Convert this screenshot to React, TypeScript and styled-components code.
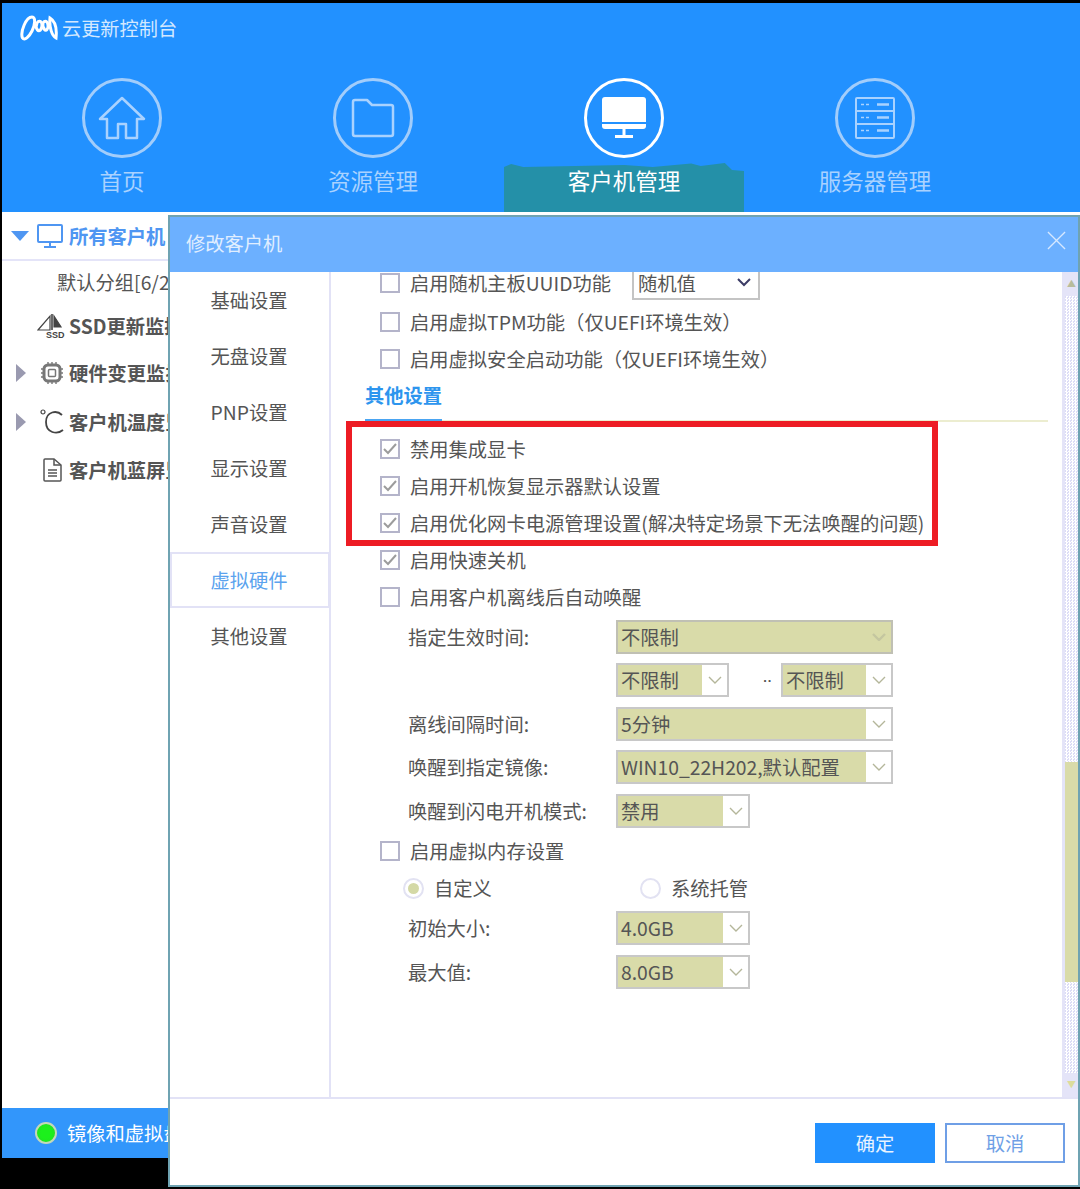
import styled, { createGlobalStyle } from "styled-components";

const FONT = `"Noto Sans CJK SC", "Noto Sans", sans-serif`;

const NAV_ITEMS = [
  { label: "首页", icon: "home" },
  { label: "资源管理", icon: "folder" },
  { label: "客户机管理", icon: "monitor", active: true },
  { label: "服务器管理", icon: "server" },
];

const DIALOG_TABS = ["基础设置", "无盘设置", "PNP设置", "显示设置", "声音设置", "虚拟硬件", "其他设置"];

const NavIcon = ({ name }: { name: string }) => {
  if (name === "home") {
    return (
      <svg width="48" height="46" viewBox="0 0 48 46" fill="none" stroke="currentColor" strokeWidth="2.5" strokeLinejoin="round">
        <path d="M24 3 L46 24 L39 24 L39 43 L28 43 L28 29 L20 29 L20 43 L9 43 L9 24 L2 24 Z" />
      </svg>
    );
  }
  if (name === "folder") {
    return (
      <svg width="44" height="40" viewBox="0 0 44 40" fill="none" stroke="currentColor" strokeWidth="2.5" strokeLinejoin="round">
        <path d="M2 4 Q2 2 4 2 L16 2 L21 7 L40 7 Q42 7 42 9 L42 36 Q42 38 40 38 L4 38 Q2 38 2 36 Z" />
      </svg>
    );
  }
  if (name === "monitor") {
    return (
      <svg width="44" height="42" viewBox="0 0 44 42" fill="currentColor">
        <path d="M3 0 L41 0 Q44 0 44 3 L44 25 L0 25 L0 3 Q0 0 3 0 Z" />
        <path d="M0 27 L44 27 L44 29 Q44 32 41 32 L3 32 Q0 32 0 29 Z" />
        <rect x="20.5" y="32" width="3" height="7" />
        <rect x="13" y="38" width="18" height="3" />
      </svg>
    );
  }
  return (
    <svg width="40" height="42" viewBox="0 0 40 42" fill="none" stroke="currentColor" strokeWidth="2">
      <rect x="1" y="1" width="38" height="40" rx="1" />
      <path d="M1 14 H39 M1 27 H39" />
      <g strokeWidth="2.5">
        <path d="M22 7.5 H34 M22 20.5 H34 M22 33.5 H34" />
        <path d="M6 7.5 H9 M11 7.5 H14 M6 20.5 H9 M11 20.5 H14 M6 33.5 H9 M11 33.5 H14" strokeWidth="1.5" />
      </g>
    </svg>
  );
};

const Logo = () => (
  <svg width="38" height="26" viewBox="0 0 38 26" fill="none" stroke="#fff" strokeWidth="3">
    <path d="M2.5 23 C0 17 6 2 12 2 C16 2 15 10 12 16 C9 22 4.5 26 2.5 23 Z" />
    <path d="M17 8 C19 5 22 6 22 10 C22 15 19 17 17.5 15 C16 13 16 10 17 8 Z" />
    <path d="M23 8 C25 5 27.5 6 28 10 C28.5 14 26 16.5 24.5 14.5 C23 12.5 22.5 10 23 8 Z" />
    <path d="M30 3 C35 6 37 14 36 23 C32 21 29 12 30 3 Z" />
  </svg>
);

const Chevron = ({ muted }: { muted?: boolean }) => (
  <svg width="14" height="8" viewBox="0 0 14 8" fill="none" stroke={muted ? "#c4c6a0" : "#b4b69a"} strokeWidth={muted ? 2.4 : 1.4}>
    <path d="M1 1 L7 7 L13 1" />
  </svg>
);

const Check = () => (
  <svg width="14" height="12" viewBox="0 0 14 12" fill="none" stroke="#9c9c9c" strokeWidth="2">
    <path d="M1 6 L5 10 L13 1" />
  </svg>
);

const CheckRow = ({ label, checked }: { label: string; checked?: boolean }) => (
  <Row>
    <CheckBox>{checked && <Check />}</CheckBox>
    <RowText>{label}</RowText>
  </Row>
);

const Select = ({ value, width, flat }: { value: string; width: number; flat?: boolean }) => (
  <SelectBox $width={width} $flat={flat}>
    <SelectValue>{value}</SelectValue>
    <SelectArrow $flat={flat}>
      <Chevron muted={flat} />
    </SelectArrow>
  </SelectBox>
);

const FormRow = ({ label, children }: { label?: string; children: React.ReactNode }) => (
  <FormLine>
    <FormLabel>{label}</FormLabel>
    {children}
  </FormLine>
);

const App = () => (
  <Page>
    <GlobalStyle />
    <ConsoleWindow>
      <Header>
        <Brand>
          <Logo />
          <BrandName>云更新控制台</BrandName>
        </Brand>
        <Nav>
          {NAV_ITEMS.map((item) => (
            <NavItem key={item.label} $active={item.active}>
              <NavCircle $active={item.active}>
                <NavIcon name={item.icon} />
              </NavCircle>
              <NavLabel>{item.label}</NavLabel>
            </NavItem>
          ))}
        </Nav>
      </Header>
      <Sidebar>
        <TreeHead>
          <DownTriangle />
          <svg width="26" height="26" viewBox="0 0 26 26" fill="none" stroke="#4f96f2" strokeWidth="2">
            <rect x="1" y="2" width="24" height="17" rx="1" />
            <path d="M13 19 V24 M7 24 H19" />
          </svg>
          <TreeHeadText>所有客户机</TreeHeadText>
        </TreeHead>
        <TreeChild>默认分组[6/2]</TreeChild>
        <TreeRow $height={42}>
          <TreeIcon>
            <svg width="30" height="26" viewBox="0 0 30 26" fill="none" stroke="#444" strokeWidth="1.2">
              <path d="M1 17 L13 3 V17 Z" />
              <path d="M15 1 V17" strokeWidth="1.6" />
              <path d="M17 3 L24 14 H17 Z" fill="#444" />
              <text x="9" y="25" fontFamily="Liberation Sans, sans-serif" fontSize="9" fontWeight="700" fill="#444" stroke="none">SSD</text>
            </svg>
          </TreeIcon>
          <TreeText>SSD更新监控</TreeText>
        </TreeRow>
        <TreeRow $height={52}>
          <RightTriangle />
          <TreeIcon>
            <svg width="24" height="24" viewBox="0 0 24 24" fill="none" stroke="#777">
              <rect x="4" y="4" width="16" height="16" rx="4" strokeWidth="3" />
              <rect x="8.5" y="8.5" width="7" height="7" rx="1" strokeWidth="1.5" />
              <path d="M1 8 H3 M1 12 H3 M1 16 H3 M21 8 H23 M21 12 H23 M21 16 H23 M8 1 V3 M12 1 V3 M16 1 V3 M8 21 V23 M12 21 V23 M16 21 V23" strokeWidth="1.4" />
            </svg>
          </TreeIcon>
          <TreeText>硬件变更监控</TreeText>
        </TreeRow>
        <TreeRow $height={46}>
          <RightTriangle />
          <TreeIcon>
            <svg width="24" height="26" viewBox="0 0 24 26" fill="none" stroke="#444" strokeWidth="1.8">
              <circle cx="3" cy="3" r="2" strokeWidth="1.2" />
              <path d="M22 6 C17 1 6 2 6 13 C6 24 17 26 23 21" />
            </svg>
          </TreeIcon>
          <TreeText>客户机温度监控</TreeText>
        </TreeRow>
        <TreeRow $height={50}>
          <TreeIcon>
            <svg width="20" height="24" viewBox="0 0 20 24" fill="none" stroke="#555" strokeWidth="1.5">
              <path d="M2 2 Q2 1 3 1 L12 1 L19 7 L19 22 Q19 23 18 23 L3 23 Q2 23 2 22 Z" />
              <path d="M12 1 V7 H19" />
              <path d="M6 12 H15 M6 15 H15 M6 18 H15" />
            </svg>
          </TreeIcon>
          <TreeText>客户机蓝屏监控</TreeText>
        </TreeRow>
      </Sidebar>
      <StatusBar>
        <StatusDot />
        <StatusText>镜像和虚拟盘服务</StatusText>
      </StatusBar>
    </ConsoleWindow>

    <Dialog>
      <DialogTitle>
        <span>修改客户机</span>
        <svg width="19" height="19" viewBox="0 0 20 20" stroke="#d6e8ff" strokeWidth="1.4">
          <path d="M1 1 L19 19 M19 1 L1 19" />
        </svg>
      </DialogTitle>
      <DialogBody>
        <Tabs>
          {DIALOG_TABS.map((tab) => (
            <Tab key={tab} $active={tab === "虚拟硬件"}>
              {tab}
            </Tab>
          ))}
        </Tabs>
        <Pane>
          <Settings>
            <FirstRow>
              <CheckBox />
              <RowText>启用随机主板UUID功能</RowText>
              <PlainSelect>
                <span>随机值</span>
                <svg width="14" height="9" viewBox="0 0 14 9" fill="none" stroke="#3c3c66" strokeWidth="2">
                  <path d="M1 1 L7 7 L13 1" />
                </svg>
              </PlainSelect>
            </FirstRow>
            <CheckRow label="启用虚拟TPM功能（仅UEFI环境生效）" />
            <CheckRow label="启用虚拟安全启动功能（仅UEFI环境生效）" />
            <SectionHead>
              <SectionTitle>其他设置</SectionTitle>
            </SectionHead>
            <Highlighted>
              <CheckRow checked label="禁用集成显卡" />
              <CheckRow checked label="启用开机恢复显示器默认设置" />
              <CheckRow checked label="启用优化网卡电源管理设置(解决特定场景下无法唤醒的问题)" />
              <RedFrame />
            </Highlighted>
            <CheckRow checked label="启用快速关机" />
            <CheckRow label="启用客户机离线后自动唤醒" />
            <FormRow label="指定生效时间:">
              <Select value="不限制" width={277} flat />
            </FormRow>
            <FormRow>
              <Select value="不限制" width={113} />
              <RangeDots>··</RangeDots>
              <Select value="不限制" width={112} />
            </FormRow>
            <FormRow label="离线间隔时间:">
              <Select value="5分钟" width={277} />
            </FormRow>
            <FormRow label="唤醒到指定镜像:">
              <Select value="WIN10_22H202,默认配置" width={277} />
            </FormRow>
            <FormRow label="唤醒到闪电开机模式:">
              <Select value="禁用" width={134} />
            </FormRow>
            <CheckRow label="启用虚拟内存设置" />
            <RadioRow>
              <RadioItem>
                <Radio $on />
                自定义
              </RadioItem>
              <RadioItem>
                <Radio />
                系统托管
              </RadioItem>
            </RadioRow>
            <FormRow label="初始大小:">
              <Select value="4.0GB" width={134} />
            </FormRow>
            <FormRow label="最大值:">
              <Select value="8.0GB" width={134} />
            </FormRow>
          </Settings>
          <ScrollBar>
            <ScrollArrow>▲</ScrollArrow>
            <ScrollTrack>
              <ScrollThumb />
            </ScrollTrack>
            <ScrollArrow $down>▼</ScrollArrow>
          </ScrollBar>
        </Pane>
      </DialogBody>
      <DialogFooter>
        <PrimaryButton>确定</PrimaryButton>
        <GhostButton>取消</GhostButton>
      </DialogFooter>
    </Dialog>
  </Page>
);

const GlobalStyle = createGlobalStyle`
  html, body {
    margin: 0;
    padding: 0;
    background: #000;
  }
  * {
    box-sizing: border-box;
  }
`;

const Page = styled.div`
  position: relative;
  width: 1080px;
  height: 1189px;
  overflow: hidden;
  padding: 3px 0 0 2px;
  background: #000;
  font-family: ${FONT};
  font-size: 19.3px;
  color: #555;
`;

const ConsoleWindow = styled.div`
  display: flex;
  flex-direction: column;
  height: 1155px;
  background: #fff;
`;

const Header = styled.header`
  height: 209px;
  background: #2291ff;
  color: #fff;
`;

const Brand = styled.div`
  display: flex;
  align-items: center;
  gap: 4px;
  height: 50px;
  padding-left: 18px;
`;

const BrandName = styled.span`
  font-size: 19.2px;
  color: #d3e8ff;
`;

const Nav = styled.nav`
  display: flex;
  gap: 11px;
`;

const NavItem = styled.div<{ $active?: boolean }>`
  position: relative;
  display: flex;
  flex-direction: column;
  align-items: center;
  width: 240px;
  height: 159px;
  padding-top: 25px;
  color: ${(p) => (p.$active ? "#fff" : "#a9d2ff")};

  ${(p) =>
    p.$active &&
    `&::before {
      content: "";
      position: absolute;
      left: 0;
      right: 0;
      bottom: 0;
      height: 50px;
      background: #2490a8;
      clip-path: polygon(0 10%, 3% 4%, 8% 10%, 30% 8%, 50% 6%, 62% 10%, 78% 3%, 82% 8%, 92% 2%, 95% 16%, 100% 18%, 100% 100%, 0 100%);
    }`}
`;

const NavCircle = styled.div<{ $active?: boolean }>`
  position: relative;
  display: flex;
  align-items: center;
  justify-content: center;
  width: 80px;
  height: 80px;
  border-radius: 50%;
  border: 3px solid ${(p) => (p.$active ? "#fff" : "#a2cdfb")};
`;

const NavLabel = styled.span`
  position: relative;
  margin-top: 5px;
  font-size: 22.5px;
  line-height: 34px;
`;

const Sidebar = styled.aside`
  flex: 1;
  margin-top: 3px;
  overflow: hidden;
`;

const TreeHead = styled.div`
  display: flex;
  align-items: center;
  height: 46px;
  padding: 0 0 2px 9px;
  border-bottom: 2px solid #e4e4f8;
`;

const DownTriangle = styled.i`
  width: 0;
  height: 0;
  margin-right: 8px;
  border-left: 9px solid transparent;
  border-right: 9px solid transparent;
  border-top: 10px solid #4f96f2;
`;

const TreeHeadText = styled.span`
  margin-left: 6px;
  font-weight: 700;
  color: #4f96f2;
  white-space: nowrap;
`;

const TreeChild = styled.div`
  height: 44px;
  padding-left: 55px;
  line-height: 42px;
  white-space: nowrap;
`;

const TreeRow = styled.div<{ $height: number }>`
  position: relative;
  display: flex;
  align-items: center;
  height: ${(p) => p.$height}px;
  padding-left: 67px;
`;

const RightTriangle = styled.i`
  position: absolute;
  left: 14px;
  width: 0;
  height: 0;
  border-top: 9px solid transparent;
  border-bottom: 9px solid transparent;
  border-left: 10px solid #9a9ab0;
`;

const TreeIcon = styled.span`
  position: absolute;
  left: 34px;
  width: 31px;
  display: flex;
  justify-content: center;
`;

const TreeText = styled.span`
  font-weight: 700;
  white-space: nowrap;
`;

const StatusBar = styled.footer`
  display: flex;
  align-items: center;
  height: 50px;
  padding-left: 33px;
  background: #3296fb;
  color: #fff;
`;

const StatusDot = styled.i`
  width: 22px;
  height: 22px;
  margin-right: 10px;
  border-radius: 50%;
  border: 2px solid #c4d8b8;
  background: radial-gradient(circle, #1cf01c 40%, #22dd22 100%);
`;

const StatusText = styled.span`
  white-space: nowrap;
`;

const Dialog = styled.section`
  position: absolute;
  left: 168px;
  top: 215px;
  right: 0;
  bottom: 2px;
  display: flex;
  flex-direction: column;
  background: #fff;
  border: 2px solid #6fa3b2;
`;

const DialogTitle = styled.div`
  display: flex;
  align-items: center;
  justify-content: space-between;
  flex: none;
  height: 55px;
  padding: 0 12px 4px 16px;
  background: #6cb0ff;
  color: #e0eeff;

  svg {
    margin-top: -4px;
  }
`;

const DialogBody = styled.div`
  display: flex;
  flex: none;
  height: 827px;
  border-bottom: 2px solid #e2e2f6;
`;

const Tabs = styled.ul`
  flex: none;
  width: 161px;
  margin: 0;
  padding: 0;
  list-style: none;
  border-right: 2px solid #e2e2f6;
`;

const Tab = styled.li<{ $active?: boolean }>`
  height: 56px;
  line-height: 56px;
  margin-right: -1px;
  padding-right: 2px;
  text-align: center;
  color: ${(p) => (p.$active ? "#5ba3ee" : "#555")};
  ${(p) => p.$active && "box-shadow: inset 0 0 0 2px #e2e2f6;"}
`;

const Pane = styled.div`
  display: flex;
  flex: 1;
  min-width: 0;
  overflow: hidden;
`;

const Settings = styled.div`
  flex: 1;
  min-width: 0;
  margin-top: -10px;
  padding: 0 14px 0 34px;
`;

const Row = styled.label`
  display: flex;
  align-items: center;
  height: 37px;
  padding-left: 15px;
  white-space: nowrap;
`;

const FirstRow = styled(Row)`
  height: 41px;
`;

const CheckBox = styled.span`
  display: flex;
  flex: none;
  align-items: center;
  justify-content: center;
  width: 20px;
  height: 20px;
  margin-right: 10px;
  border: 2px solid #b4b4ca;
  background: #fff;
`;

const RowText = styled.span`
  white-space: nowrap;
`;

const PlainSelect = styled.span`
  display: flex;
  align-items: center;
  justify-content: space-between;
  width: 128px;
  height: 34px;
  margin-left: 21px;
  padding: 0 7px 0 4px;
  border: 2px solid #c4c4c4;
`;

const SectionHead = styled.div`
  height: 45px;
  border-bottom: 2px solid #ecedd0;
`;

const SectionTitle = styled.span`
  display: inline-block;
  height: 45px;
  border-bottom: 3px solid #4aa5f2;
  color: #2d95ee;
  font-weight: 700;
  line-height: 37px;
`;

const Highlighted = styled.div`
  position: relative;
  margin-top: 8px;
`;

const RedFrame = styled.div`
  position: absolute;
  left: -19px;
  top: -9px;
  width: 592px;
  height: 125px;
  border: 6px solid #ed1c24;
  pointer-events: none;
`;

const FormLine = styled.div`
  display: flex;
  align-items: center;
  height: 43.5px;
  padding-left: 43px;
  white-space: nowrap;
`;

const FormLabel = styled.span`
  flex: none;
  width: 208px;
`;

const SelectBox = styled.div<{ $width: number; $flat?: boolean }>`
  display: flex;
  flex: none;
  width: ${(p) => p.$width}px;
  height: 34px;
  border: 2px solid ${(p) => (p.$flat ? "#c0c0b4" : "#c8c8c8")};
  background: #d9dba9;
`;

const SelectValue = styled.span`
  flex: 1;
  padding-left: 3px;
  line-height: 30px;
`;

const SelectArrow = styled.span<{ $flat?: boolean }>`
  display: flex;
  flex: none;
  align-items: center;
  justify-content: center;
  width: 25px;
  background: ${(p) => (p.$flat ? "transparent" : "#fff")};
`;

const RangeDots = styled.span`
  width: 52px;
  padding-right: 9px;
  text-align: right;
  font-family: "Liberation Sans", sans-serif;
  font-size: 13px;
  font-weight: 700;
`;

const RadioRow = styled.div`
  display: flex;
  align-items: center;
  height: 37px;
  padding-left: 38px;
`;

const RadioItem = styled.label`
  display: flex;
  align-items: center;
  width: 237px;
`;

const Radio = styled.span<{ $on?: boolean }>`
  display: flex;
  align-items: center;
  justify-content: center;
  width: 21px;
  height: 21px;
  margin-right: 10px;
  border-radius: 50%;
  border: 2px solid #e2e2f2;

  &::after {
    content: "";
    width: 11px;
    height: 11px;
    border-radius: 50%;
    background: ${(p) => (p.$on ? "#d4d9a6" : "transparent")};
  }
`;

const ScrollBar = styled.div`
  display: flex;
  flex: none;
  flex-direction: column;
  width: 16px;
  border-left: 3px solid #e4e4f8;
  background: #e4e4f8;
`;

const ScrollArrow = styled.span<{ $down?: boolean }>`
  flex: none;
  height: 24px;
  color: ${(p) => (p.$down ? "#dcdc9c" : "#b8bc9c")};
  font-size: 9px;
  line-height: 24px;
  text-align: center;
`;

const ScrollTrack = styled.div`
  display: flex;
  flex: 1;
  flex-direction: column;
  justify-content: flex-start;
  padding-top: 466px;
  background: repeating-conic-gradient(#fff 0 25%, #dcdcf6 0 50%) 0 0 / 3px 3px;
`;

const ScrollThumb = styled.div`
  height: 220px;
  background: #d9dba9;
`;

const DialogFooter = styled.div`
  display: flex;
  flex: 1;
  justify-content: flex-end;
  gap: 10px;
  padding: 24px 13px 0 0;
`;

const PrimaryButton = styled.button`
  width: 120px;
  height: 40px;
  padding: 0;
  border: none;
  background: #2291ff;
  color: #e8f3ff;
  font: inherit;
`;

const GhostButton = styled(PrimaryButton)`
  border: 2px solid #6f9fe6;
  background: #fff;
  color: #6f9fe6;
`;

export default App;
